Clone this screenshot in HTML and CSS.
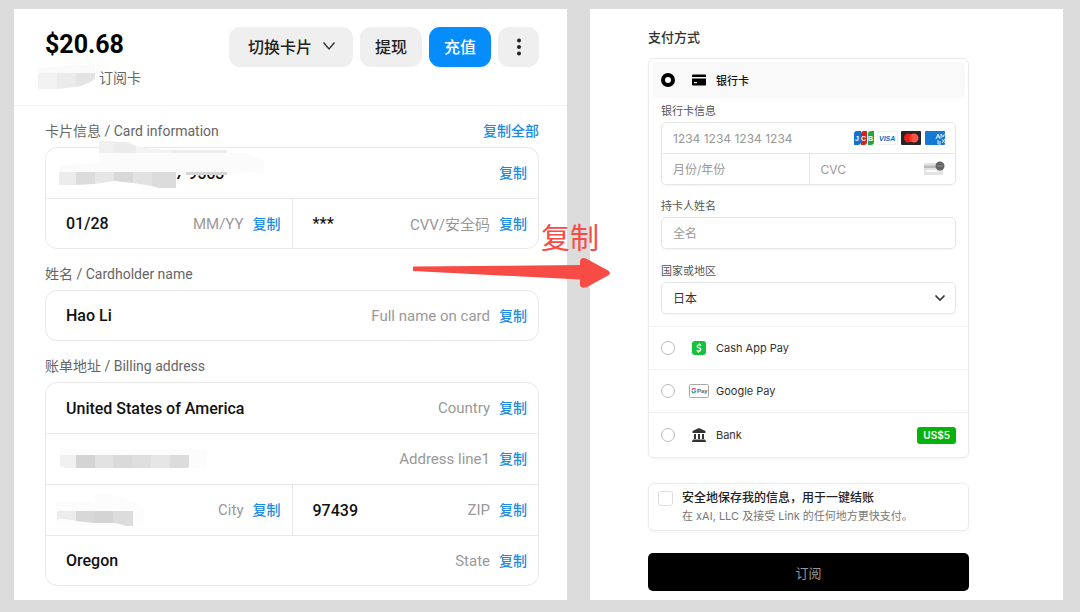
FILE: index.html
```html
<!DOCTYPE html>
<html lang="zh-CN">
<head>
    <meta charset="UTF-8">
    <meta name="viewport" content="width=device-width, initial-scale=1">
    <title>订阅支付</title>
    <link rel="stylesheet" href="styles.css">
</head>
<body>
<main class="wallet">
    <header class="head">
        <div class="balance">
            <h1>$20.68</h1>
            <p>
                <svg class="mask-name" width="60" height="26" viewBox="0 0 60 26" aria-hidden="true">
                    <path fill="#fafafa" d="M1 4L58 0V10H1z"/>
                    <path fill="#f2f2f2" d="M1 9H20V25H1z"/>
                    <path fill="#ebebeb" d="M20 9H39V23L20 25z"/>
                    <path fill="#e4e4e4" d="M39 9H58V15Q52 20 39 23z"/>
                </svg>
                订阅卡
            </p>
        </div>
        <div class="actions">
            <button class="btn switch">切换卡片
                <svg width="14" height="10" viewBox="0 0 14 10" fill="none" stroke="#333" stroke-width="1.4" aria-hidden="true"><path d="M1.500 1.500L7 8L12.500 1.500"/></svg>
            </button>
            <button class="btn">提现</button>
            <button class="btn primary">充值</button>
            <button class="btn more" aria-label="更多">
                <svg width="6" height="18" viewBox="0 0 6 18" fill="#222" aria-hidden="true"><circle cx="3" cy="2.500" r="2"/><circle cx="3" cy="9" r="2"/><circle cx="3" cy="15.500" r="2"/></svg>
            </button>
        </div>
    </header>

    <section class="block">
        <div class="title"><h2>卡片信息 / Card information</h2><button class="copy">复制全部</button></div>
        <div class="card">
            <div class="row">
                <div class="cell">
                    <b class="tail">7 9563</b>
                    <svg class="mask-number" width="210" height="50" viewBox="0 0 210 50" aria-hidden="true">
                        <path fill="#fbfbfb" d="M3 26L43 22V13H190L208 20V34L188 32L172 35H3z"/>
                        <path fill="#f0f0f0" d="M43 1H58V13H43z"/>
                        <path fill="#ebebeb" d="M58 2L70 2L80 6V13H58z"/>
                        <path fill="#f3f3f3" d="M80 6L96 9L116 10V13H80z"/>
                        <path fill="#ededed" d="M116 10H171V13H116z"/>
                        <path fill="#ececec" d="M3 32H20V45H3z"/>
                        <path fill="#dcdcdc" d="M20 32H39V44L20 45z"/>
                        <path fill="#e6e6e6" d="M39 32H58V41L39 44z"/>
                        <path fill="#d8d8d8" d="M58 32H77V43L58 41z"/>
                        <path fill="#e2e2e2" d="M77 32H96V46L77 43z"/>
                        <path fill="#dcdcdc" d="M96 32H120V48H103L96 46z"/>
                        <path fill="#d6d6d6" d="M130 32H171V35H130z"/>
                    </svg>
                    <button class="copy">复制</button>
                </div>
            </div>
            <div class="row">
                <div class="cell"><b>01/28</b><span>MM/YY</span><button class="copy">复制</button></div>
                <div class="cell"><b>***</b><span>CVV/安全码</span><button class="copy">复制</button></div>
            </div>
        </div>
    </section>

    <section class="block">
        <div class="title"><h2>姓名 / Cardholder name</h2></div>
        <div class="card">
            <div class="row">
                <div class="cell"><b>Hao Li</b><span>Full name on card</span><button class="copy">复制</button></div>
            </div>
        </div>
    </section>

    <section class="block">
        <div class="title"><h2>账单地址 / Billing address</h2></div>
        <div class="card">
            <div class="row">
                <div class="cell"><b>United States of America</b><span>Country</span><button class="copy">复制</button></div>
            </div>
            <div class="row">
                <div class="cell">
                    <svg class="mask-line" width="150" height="20" viewBox="0 0 150 20" aria-hidden="true">
                        <path fill="#fcfcfc" d="M0 0H135L147 2V19H0z"/>
                        <path fill="#f0f0f0" d="M0 6H16V19H6L0 17z"/>
                        <path fill="#d4d4d4" d="M16 6H35V19H16z"/>
                        <path fill="#e2e2e2" d="M35 6H53V19H35z"/>
                        <path fill="#dadada" d="M53 6H72V19H53z"/>
                        <path fill="#dedede" d="M72 6H91V19H72z"/>
                        <path fill="#e6e6e6" d="M91 6H110V19H91z"/>
                        <path fill="#dcdcdc" d="M110 6H129V18L127 19H110z"/>
                    </svg>
                    <span>Address line1</span><button class="copy">复制</button>
                </div>
            </div>
            <div class="row">
                <div class="cell">
                    <svg class="mask-city" width="90" height="40" viewBox="0 -4 90 40" aria-hidden="true">
                        <path fill="#fcfcfc" d="M0 8H38V1H58L88 12V31H0z"/>
                        <path fill="#ececec" d="M1 17H20V27L10 25L1 25z"/>
                        <path fill="#d8d8d8" d="M20 17H38V29L20 27z"/>
                        <path fill="#d4d4d4" d="M38 17H57V29H38z"/>
                        <path fill="#dcdcdc" d="M57 17H77V32H69L65 30L57 29z"/>
                    </svg>
                    <span>City</span><button class="copy">复制</button>
                </div>
                <div class="cell"><b>97439</b><span>ZIP</span><button class="copy">复制</button></div>
            </div>
            <div class="row">
                <div class="cell"><b>Oregon</b><span>State</span><button class="copy">复制</button></div>
            </div>
        </div>
    </section>

    <div class="hint">
        <strong>复制</strong>
        <svg width="198" height="32" viewBox="0 0 198 32" aria-hidden="true">
            <path fill="#f74b45" d="M0 9.500L167 8V4Q168 0 173 1.500L195 13.500Q199 16 195 18.500L174 30Q168 32 167 28V22.500L0 14z"/>
        </svg>
    </div>
</main>

<form class="checkout">
    <h2>支付方式</h2>
    <div class="methods">
        <label class="method active">
            <input type="radio" name="method" checked>
            <svg width="22" height="14" viewBox="0 0 22 14" aria-hidden="true"><path d="M4 2.500Q4 1.500 5 1.500H17Q18 1.500 18 2.500V4H4z" /><path d="M4 5.500H18V11.500Q18 12.500 17 12.500H5Q4 12.500 4 11.500z"/><path fill="#fff" d="M6 9H9V10.200H6z"/></svg>
            <span>银行卡</span>
        </label>
        <div class="fields">
            <label for="number">银行卡信息</label>
            <div class="group">
                <div class="line">
                    <input id="number" type="text" placeholder="1234 1234 1234 1234">
                    <svg class="brands" width="92" height="14" viewBox="0 0 92 14" aria-hidden="true">
                        <path fill="#1273cf" d="M3 0H7V11Q7 14 4 14H0V3Q0 0 3 0z"/>
                        <path fill="#d9201c" d="M10 0H13V11Q13 14 10 14H7V3Q7 0 10 0z"/>
                        <path fill="#20a83a" d="M17 0H20V11Q20 14 17 14H14V3Q14 0 17 0z"/>
                        <text class="jcb" x="1" y="10">J</text><text class="jcb" x="7" y="10">C</text><text class="jcb" x="14" y="10">B</text>
                        <rect x="23.500" y=".5" width="20" height="13" rx="1" fill="#fff" stroke="#eee"/>
                        <text class="visa" x="25" y="10">VISA</text>
                        <rect x="47" width="20" height="14" rx="1" fill="#252525"/>
                        <circle cx="54.500" cy="7" r="4.500" fill="#eb1c16"/><circle cx="60" cy="7" r="4.500" fill="#f9564a"/><path fill="#f23a28" d="M57.200 3.400Q60 7 57.200 10.600Q54.500 7 57.200 3.400z"/>
                        <rect x="71" width="20" height="14" rx="1" fill="#1479d4"/>
                        <path fill="none" stroke="#d9ecfb" d="M82 8L84 3L86 8M83 6H86M87 3V7M87 3L89 6L90.500 3M84 9V13H87M84 11H87M88 8L91 12M91 8L88 12"/>
                    </svg>
                </div>
                <div class="line halves">
                    <input type="text" placeholder="月份/年份" aria-label="月份/年份">
                    <div class="cvc">
                        <input type="text" placeholder="CVC" aria-label="CVC">
                        <svg width="22" height="16" viewBox="0 0 22 16" aria-hidden="true"><rect y="2" width="19" height="12" rx="1.500" fill="#e3e3e3"/><path fill="#bbb" d="M0 4.500H14V7H0z"/><path fill="#fff" d="M2 9H13V11H2z"/><circle cx="16" cy="5" r="4.500" fill="#666"/><path stroke="#bbb" d="M13.500 5H14.500M15.500 5H16.500M17.500 5H18.500"/></svg>
                    </div>
                </div>
            </div>
            <label for="holder">持卡人姓名</label>
            <input class="box" id="holder" type="text" placeholder="全名">
            <label for="country">国家或地区</label>
            <div class="select">
                <select class="box" id="country"><option>日本</option></select>
                <svg width="12" height="8" viewBox="0 0 12 8" fill="none" stroke="#333" stroke-width="1.600" aria-hidden="true"><path d="M1.500 1.500L6 6L10.500 1.500"/></svg>
            </div>
        </div>
        <label class="method">
            <input type="radio" name="method">
            <svg width="22" height="14" viewBox="0 0 22 14" aria-hidden="true"><rect x="4" width="14" height="14" rx="3" fill="#14c23b"/><path fill="none" stroke="#fff" stroke-width="1.300" d="M13.200 4.800Q11.500 3.400 9.800 4.300Q8.600 5.600 10 6.500L12 7.300Q13.400 8.300 12.200 9.600Q10.400 10.700 8.600 9.300M11.600 2.500L11.300 4M10.600 10L10.300 11.600"/></svg>
            <span>Cash App Pay</span>
        </label>
        <label class="method">
            <input type="radio" name="method">
            <svg width="22" height="14" viewBox="0 0 22 14" aria-hidden="true">
                <rect x="1.500" y=".5" width="19" height="13" rx="1" fill="#fff" stroke="#aaa"/>
                <path fill="none" stroke="#ea4335" stroke-width="1.200" d="M7.700 5.300Q5.700 3.700 4 5.800"/><path fill="none" stroke="#34a853" stroke-width="1.200" d="M3.900 6.500Q4.200 9.300 6.500 8.700"/><path fill="none" stroke="#4285f4" stroke-width="1.200" d="M6 7H7.800Q7.700 8 6.500 8.700"/>
                <text class="gpay" x="9" y="9">Pay</text>
            </svg>
            <span>Google Pay</span>
        </label>
        <label class="method last">
            <input type="radio" name="method">
            <svg width="22" height="14" viewBox="0 0 22 14" fill="#333" aria-hidden="true"><path d="M11 0L17.500 3V5H4.500V3zM6 6H8V11H6zM10 6H12V11H10zM14 6H16V11H14zM5 11.500H17V12.500H18V14H4V12.500H5z"/></svg>
            <span>Bank</span>
            <em>US$5</em>
        </label>
    </div>

    <label class="save">
        <input type="checkbox">
        <span class="save-text">
            <b>安全地保存我的信息，用于一键结账</b>
            <small>在 xAI, LLC 及接受 Link 的任何地方更快支付。</small>
        </span>
    </label>
    <button class="submit" type="button">订阅</button>
</form>
</body>
</html>
```
FILE: styles.css
```css
*{box-sizing:border-box;}
body{margin:0;padding:9px 17px 12px 14px;min-height:100vh;display:grid;grid-template-columns:minmax(0,553fr) minmax(0,473fr);column-gap:23px;background:#dcdcdc;font-family:Roboto,"Noto Sans CJK SC",sans-serif;color:#111;}
h1,h2,p{margin:0;}
button,input,select{font-family:inherit;margin:0;}
button{border:0;cursor:pointer;}

/* wallet */
.wallet{position:relative;background:#fff;padding-bottom:12px;}
.head{display:flex;justify-content:space-between;align-items:flex-start;height:97px;padding:18px 28px 0 31px;border-bottom:1px solid #f2f2f2;}
.balance h1{font-size:25px;line-height:36px;font-weight:700;color:#000;}
.balance p{display:flex;align-items:center;gap:2px;height:28px;margin-left:-8px;font-size:14px;color:#666;}
.actions{display:flex;gap:7px;}
.btn{height:40px;padding:0 15px 2px;border-radius:11px;background:#efefef;color:#222;font-size:16px;font-weight:500;}
.switch{display:flex;align-items:center;gap:10px;padding:0 17px 2px 19px;}
.primary{background:#078dfb;color:#fff;}
.more{display:flex;align-items:center;justify-content:center;width:41px;padding:0;}
.block{padding:15px 28px 0 31px;}
.title{display:flex;justify-content:space-between;align-items:center;height:20px;margin-bottom:6px;}
.title h2{font-size:14px;line-height:20px;font-weight:400;color:#666;}
.copy{padding:0;background:none;color:#1c8ce0;font-size:14px;line-height:20px;font-weight:500;white-space:nowrap;}
.card{border:1px solid #e8e8e8;border-radius:12px;}
.row{display:flex;height:51px;border-bottom:1px solid #e8e8e8;}
.row:last-child{height:49px;border-bottom:0;}
.cell{flex:1;display:flex;align-items:center;position:relative;padding:0 11px 0 20px;}
.cell + .cell{border-left:1px solid #e8e8e8;}
.cell b{font-size:16px;font-weight:500;color:#111;}
.cell span{margin-left:auto;font-size:15px;color:#999;}
.cell .copy{margin-left:9px;}
.cell .tail{margin:0 auto 0 109px;}
.mask-number{position:absolute;left:10px;top:-8px;}
.mask-line{margin-left:-6px;}
.mask-city{margin-left:-10px;}
.hint{position:absolute;right:-44px;top:212px;width:198px;text-align:right;}
.hint strong{display:block;padding-right:12px;font-size:29px;line-height:36px;font-weight:400;color:#f74b45;}
.hint svg{display:block;}

/* checkout */
.checkout{background:#fff;padding:18px 94px 9px 58px;font-family:Inter,"Noto Sans CJK SC",sans-serif;color:#333;}
.checkout h2{font-size:13px;line-height:20px;font-weight:500;margin-bottom:11px;}
.methods,.save{border:1px solid #ececec;border-radius:6px;box-shadow:0 1px 3px rgba(0,0,0,.06);}
.method{display:flex;align-items:center;height:43px;padding:0 12px;border-top:1px solid #f0f0f0;font-size:11px;}
.method svg{margin:0 6px 0 13px;}
.method input{appearance:none;width:14px;height:14px;border:1px solid #bbb;border-radius:50%;background:#fff;}
.method input:checked{border:4px solid #000;}
.active{height:36px;margin:3px;padding:0 9px;border:0;border-radius:5px;background:#f9f9f9;font-weight:500;color:#111;}
.last{height:45px;}
.method em{margin-left:auto;padding:0 6px;border-radius:3px;background:#06b30c;color:#fff;font-size:10px;line-height:17px;font-style:normal;font-weight:600;}
.fields{padding:2px 12px 12px;}
.fields label{display:block;margin-bottom:3px;font-size:11px;line-height:16px;color:#555;}
.fields input,.fields select{width:100%;min-width:0;height:30px;padding:0 11px;border:0;background:none;font-size:12px;color:#333;}
.fields input::placeholder{color:#999;opacity:1;}
.group,.fields .box{border:1px solid #e6e6e6;border-radius:5px;box-shadow:0 1px 2px rgba(0,0,0,.05);}
.group{margin-bottom:13px;}
.fields .box{height:32px;}
.fields > .box{margin-bottom:14px;}
.line{display:flex;align-items:center;}
.halves{display:grid;grid-template-columns:1fr 1fr;border-top:1px solid #e6e6e6;}
.brands{flex:none;margin-right:9px;}
.cvc{display:flex;align-items:center;padding-right:9px;border-left:1px solid #e6e6e6;}
.cvc svg{flex:none;}
.select{display:grid;align-items:center;}
.select select{appearance:none;grid-area:1/1;}
.select svg{grid-area:1/1;justify-self:end;margin-right:10px;pointer-events:none;}
.jcb{font:bold 7px "Liberation Sans",sans-serif;fill:#fff;}
.visa{font:italic bold 7px "Liberation Sans",sans-serif;fill:#1a66b8;}
.gpay{font:bold 6px "Liberation Sans",sans-serif;fill:#666;}
.save{display:flex;align-items:flex-start;gap:9px;margin-top:25px;padding:5px 9px;}
.save input{appearance:none;flex:none;width:15px;height:15px;margin:2px 0 0;border:1px solid #ddd;border-radius:3px;}
.save b,.save small{display:block;line-height:18px;}
.save b{font-size:12px;font-weight:500;color:#222;}
.save small{font-size:11px;color:#777;}
.submit{display:block;width:100%;height:38px;margin-top:22px;border-radius:5px;background:#000;color:#999;font-size:13px;}
```
